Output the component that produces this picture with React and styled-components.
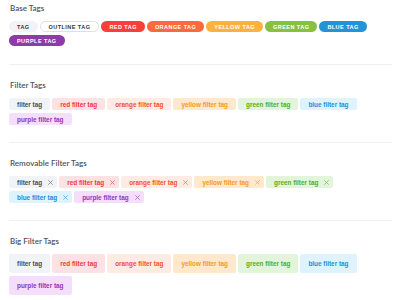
import React from 'react';
import styled, { createGlobalStyle, css } from 'styled-components';

const GlobalStyle = createGlobalStyle`
  html, body {
    margin: 0;
    padding: 0;
    background: #ffffff;
    font-family: "Liberation Sans", Arial, sans-serif;
  }
`;

const solid = {
  gray: '#f1f3f7',
  red: '#f7403a',
  orange: '#fb6a3c',
  yellow: '#ffb13f',
  green: '#87c144',
  blue: '#2494d8',
  purple: '#8e3aa9',
};

const soft = {
  gray: { bg: '#f2f3f7', fg: '#4a4d55' },
  red: { bg: '#fde2e3', fg: '#f2363d' },
  orange: { bg: '#feebe4', fg: '#f4512f' },
  yellow: { bg: '#ffe8cc', fg: '#f39a1f' },
  green: { bg: '#e2f5da', fg: '#52ad25' },
  blue: { bg: '#dff3fd', fg: '#1f8ddb' },
  purple: { bg: '#f5ddfc', fg: '#9236b7' },
};

const Page = styled.div`
  padding: 0 8px 0 9px;
`;

const Section = styled.section`
  padding: ${p => (p.first ? '3px 0 18px' : '15px 0 17px')};
  border-bottom: ${p => (p.last ? 'none' : '1px solid #eef0f2')};
`;

const Heading = styled.h3`
  margin: 0 0 8px 1px;
  font-family: Lato, "Liberation Sans", sans-serif;
  font-size: 8px;
  line-height: 10px;
  font-weight: 600;
  color: #4f525a;
`;

const Row = styled.div`
  display: flex;
  flex-wrap: wrap;
  gap: 3px 2px;
`;

const BaseTag = styled.span`
  display: inline-flex;
  align-items: center;
  height: 11px;
  padding: 0 8px;
  border-radius: 6px;
  box-sizing: border-box;
  font-size: 5.5px;
  font-weight: 700;
  letter-spacing: 0.45px;
  text-transform: uppercase;
  color: #ffffff;
  background: ${p => solid[p.color]};
  ${p =>
    p.color === 'gray' &&
    css`
      color: #33363d;
    `}
  ${p =>
    p.outline &&
    css`
      background: #ffffff;
      color: #33363d;
      border: 1px solid #dcdfe4;
    `}
`;

const FilterTag = styled.span`
  display: inline-flex;
  align-items: center;
  gap: 6px;
  height: ${p => (p.big ? '19px' : '12px')};
  padding: ${p => (p.removable ? '0 4px 0 8px' : '0 8px')};
  border-radius: 2px;
  font-size: 6.4px;
  font-weight: 700;
  color: ${p => soft[p.color].fg};
  background: ${p => soft[p.color].bg};
`;

const Remove = styled.svg`
  width: 5px;
  height: 5px;
  stroke: currentColor;
  opacity: 0.7;
`;

const colors = ['red', 'orange', 'yellow', 'green', 'blue', 'purple'];
const filters = ['gray', ...colors];

function Cross() {
  return (
    <Remove viewBox="0 0 5 5">
      <path d="M0.3 0.3 L4.7 4.7 M4.7 0.3 L0.3 4.7" strokeWidth="0.8" fill="none" />
    </Remove>
  );
}

const label = c => (c === 'gray' ? 'filter tag' : `${c} filter tag`);

export default function App() {
  return (
    <Page>
      <GlobalStyle />
      <Section first>
        <Heading>Base Tags</Heading>
        <Row>
          <BaseTag color="gray">Tag</BaseTag>
          <BaseTag outline>Outline Tag</BaseTag>
          {colors.map(c => (
            <BaseTag key={c} color={c}>{c} tag</BaseTag>
          ))}
        </Row>
      </Section>
      <Section>
        <Heading>Filter Tags</Heading>
        <Row>
          {filters.map(c => (
            <FilterTag key={c} color={c}>{label(c)}</FilterTag>
          ))}
        </Row>
      </Section>
      <Section>
        <Heading>Removable Filter Tags</Heading>
        <Row>
          {filters.map(c => (
            <FilterTag key={c} color={c} removable>
              {label(c)}
              <Cross />
            </FilterTag>
          ))}
        </Row>
      </Section>
      <Section last>
        <Heading>Big Filter Tags</Heading>
        <Row>
          {filters.map(c => (
            <FilterTag key={c} color={c} big>{label(c)}</FilterTag>
          ))}
        </Row>
      </Section>
    </Page>
  );
}
